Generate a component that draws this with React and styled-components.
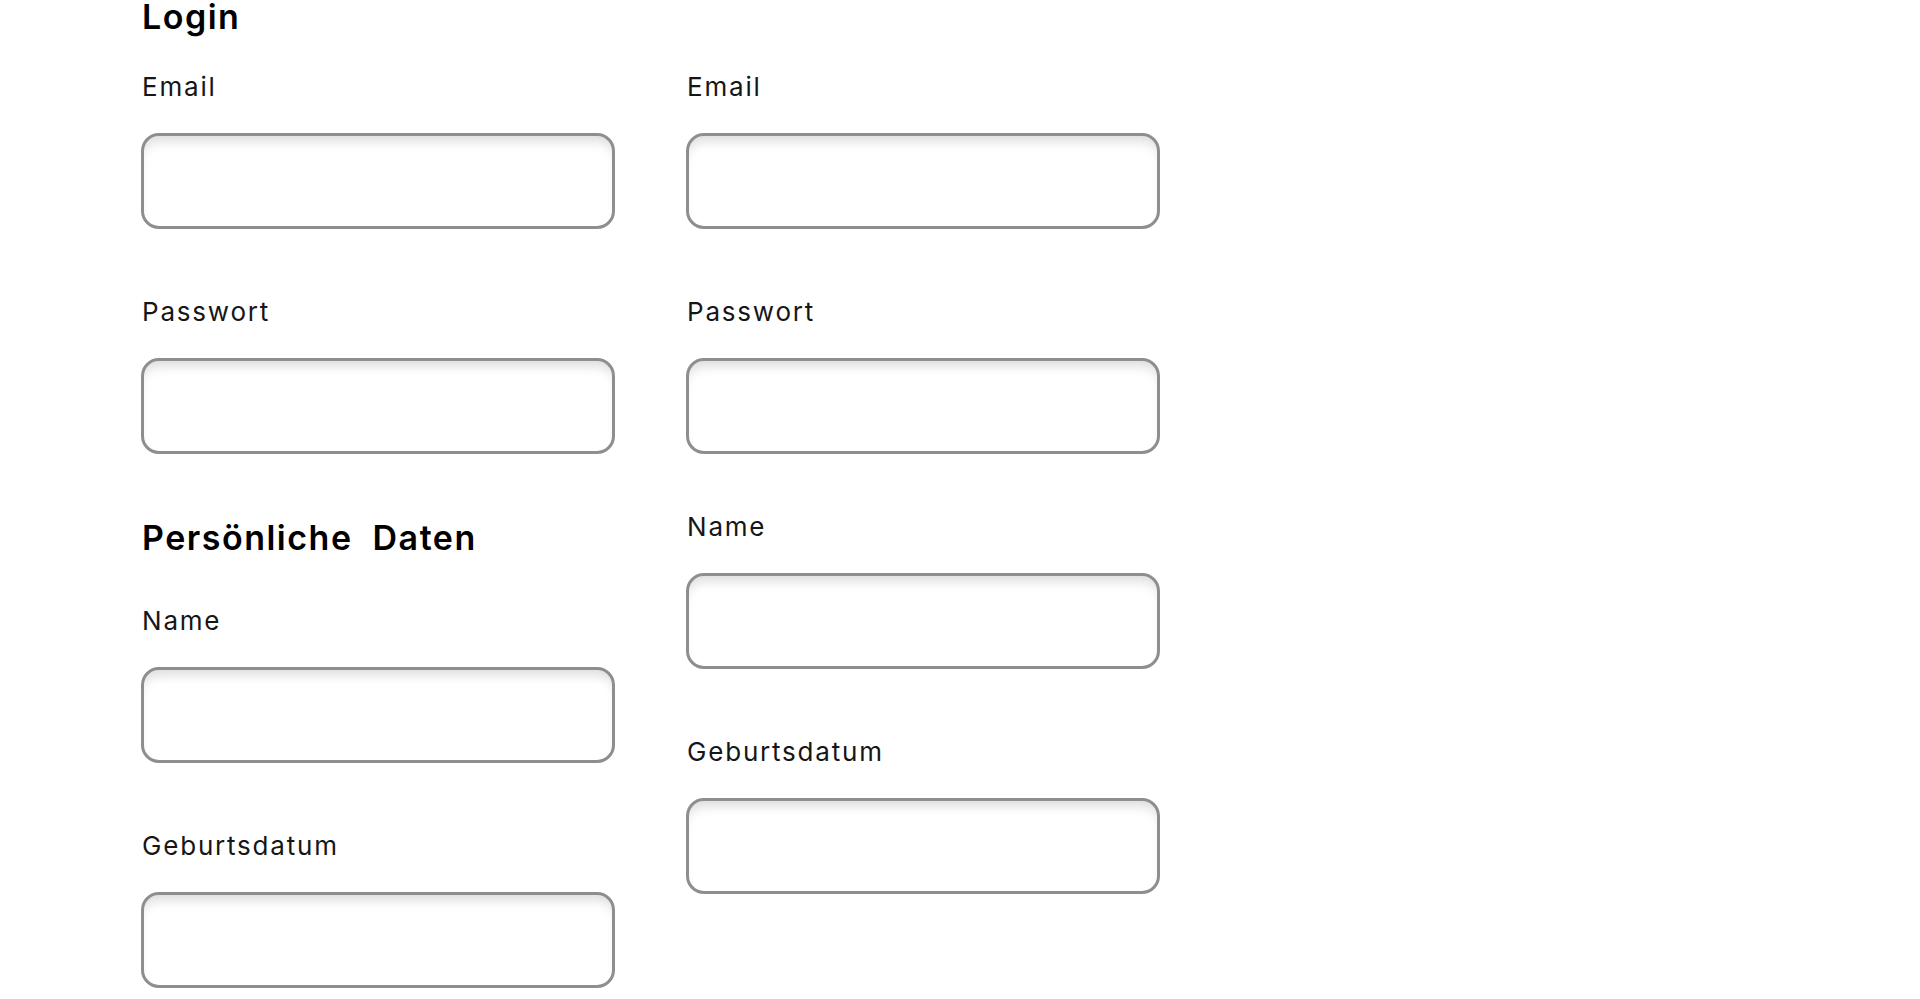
import React from "react";
import styled, { createGlobalStyle } from "styled-components";

const GlobalStyle = createGlobalStyle`
  body {
    margin: 0;
    background: #fff;
    font-family: Inter, "Open Sans", Roboto, sans-serif;
  }
`;

const Page = styled.main`
  display: flex;
  gap: 71px;
  padding: 0 0 0 141px;
`;

const Column = styled.section`
  display: flex;
  flex-direction: column;
  width: 474px;
`;

const Heading = styled.h2`
  margin: ${(p) => p.$top || 0}px 0 ${(p) => p.$bottom || 40}px;
  padding: 1px 0 0 1px;
  font-size: 34px;
  line-height: 32px;
  font-weight: 600;
  color: #000;
  word-spacing: 10px;
  letter-spacing: 1.5px;
`;

const Field = styled.div`
  display: flex;
  flex-direction: column;
  gap: 31px;
  margin-top: ${(p) => (p.$top != null ? p.$top : 68)}px;
`;

const Label = styled.label`
  padding-left: 1px;
  font-size: 26px;
  line-height: 30px;
  color: #161616;
  letter-spacing: 1.8px;
`;

const Input = styled.input`
  box-sizing: border-box;
  width: 474px;
  height: 96px;
  border: 3px solid #8e8e8e;
  border-radius: 18px;
  background: #fff;
  box-shadow: inset 0 11px 12px -6px rgba(0, 0, 0, 0.14);
  outline: none;
  padding: 0 16px;
  font-size: 24px;
  font-family: inherit;
`;

function FormField({ label, type = "text", top }) {
  return (
    <Field $top={top}>
      <Label>{label}</Label>
      <Input type={type} />
    </Field>
  );
}

export default function App() {
  return (
    <>
      <GlobalStyle />
      <Page>
        <Column>
          <Heading $bottom={39}>Login</Heading>
          <FormField label="Email" type="email" top={0} />
          <FormField label="Passwort" type="password" />
          <Heading $top={67} $bottom={52}>
            Persönliche Daten
          </Heading>
          <FormField label="Name" top={0} />
          <FormField label="Geburtsdatum" />
        </Column>
        <Column>
          <FormField label="Email" type="email" top={72} />
          <FormField label="Passwort" type="password" />
          <FormField label="Name" top={58} />
          <FormField label="Geburtsdatum" />
        </Column>
      </Page>
    </>
  );
}
